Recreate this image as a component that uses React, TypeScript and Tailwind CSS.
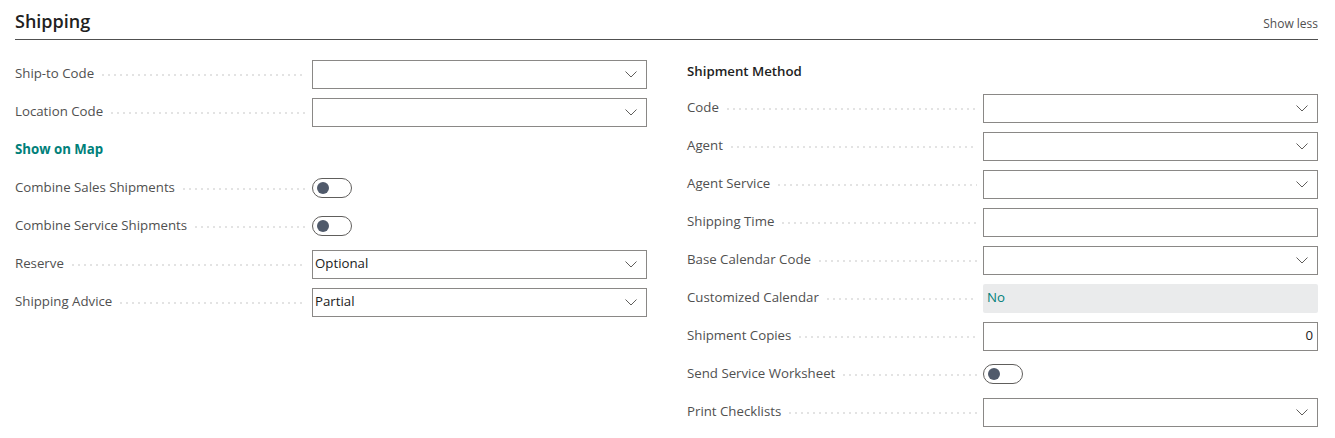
import React from 'react';

// 欄位類型
type Field =
  | { label: string; kind: 'select'; value?: string }
  | { label: string; kind: 'text'; value?: string; align?: 'right' }
  | { label: string; kind: 'toggle' }
  | { label: string; kind: 'readonly'; value: string };

const leftFields: Field[] = [
  { label: 'Ship-to Code', kind: 'select' },
  { label: 'Location Code', kind: 'select' },
];

const leftFields2: Field[] = [
  { label: 'Combine Sales Shipments', kind: 'toggle' },
  { label: 'Combine Service Shipments', kind: 'toggle' },
  { label: 'Reserve', kind: 'select', value: 'Optional' },
  { label: 'Shipping Advice', kind: 'select', value: 'Partial' },
];

const rightFields: Field[] = [
  { label: 'Code', kind: 'select' },
  { label: 'Agent', kind: 'select' },
  { label: 'Agent Service', kind: 'select' },
  { label: 'Shipping Time', kind: 'text' },
  { label: 'Base Calendar Code', kind: 'select' },
  { label: 'Customized Calendar', kind: 'readonly', value: 'No' },
  { label: 'Shipment Copies', kind: 'text', value: '0', align: 'right' },
  { label: 'Send Service Worksheet', kind: 'toggle' },
  { label: 'Print Checklists', kind: 'select' },
];

const Chevron = () => (
  <svg width="14" height="8" viewBox="0 0 14 8" fill="none" className="shrink-0">
    <path d="M1.5 1.5l5.5 5.5 5.5-5.5" stroke="#605e5c" strokeWidth="1" />
  </svg>
);

const Control: React.FC<{ field: Field }> = ({ field }) => {
  if (field.kind === 'toggle') {
    return (
      <div className="flex h-[20px] w-[40px] items-center rounded-full border border-[#605e5c] bg-white pl-[4px]">
        <div className="h-[12px] w-[12px] rounded-full bg-[#505a6b]" />
      </div>
    );
  }
  if (field.kind === 'readonly') {
    return (
      <div className="flex h-[29px] w-full items-center rounded-[2px] bg-[#eaebec] px-[4px] text-[#00807a]">
        {field.value}
      </div>
    );
  }
  if (field.kind === 'text') {
    return (
      <div
        className={`flex h-[29px] w-full items-center border border-[#8a8886] bg-white px-[4px] text-[#212121] ${
          field.align === 'right' ? 'justify-end' : 'justify-start'
        }`}
      >
        {field.value}
      </div>
    );
  }
  return (
    <div className="flex h-[29px] w-full items-center justify-between border border-[#8a8886] bg-white pl-[2px] pr-[8px] text-[#212121]">
      <span>{field.value}</span>
      <Chevron />
    </div>
  );
};

const FieldRow: React.FC<{ field: Field; labelW?: string }> = ({ field, labelW = 'w-[297px]' }) => (
  <div className="flex h-[38px] items-center">
    <div className={`flex ${labelW} shrink-0 items-center pr-[6px]`}>
      <span className="whitespace-nowrap text-[#505050]">{field.label}</span>
      {/* 虛線引導 */}
      <span className="ml-[8px] mt-[2px] h-[2px] flex-1 bg-[linear-gradient(to_right,#e3e3e3_2px,transparent_2px)] bg-[length:6px_2px] bg-repeat-x" />
    </div>
    <div className="flex flex-1 items-center">
      <Control field={field} />
    </div>
  </div>
);

export default function App() {
  return (
    <div
      className="h-[438px] w-[1335px] bg-white pl-[15px] pr-[17px] pt-[9px] text-[13.25px]"
      style={{ fontFamily: '"Open Sans", "Noto Sans", sans-serif' }}
    >
      {/* 標題列 */}
      <div className="flex items-end justify-between border-b border-[#505050] pb-[5px]">
        <h1 className="text-[18px] font-semibold leading-[25px] text-[#212121]">Shipping</h1>
        <button className="mb-[1px] text-[12px] text-[#505050]">Show less</button>
      </div>

      <div className="mt-[15px] flex gap-[40px]">
        {/* 左欄 */}
        <div className="w-[632px]">
          {leftFields.map((f) => (
            <FieldRow key={f.label} field={f} />
          ))}
          <div className="flex h-[38px] items-center font-bold text-[#00807a]">Show on Map</div>
          {leftFields2.map((f) => (
            <FieldRow key={f.label} field={f} />
          ))}
        </div>

        {/* 右欄 */}
        <div className="w-[631px]">
          <div className="flex h-[34px] items-center font-semibold text-[#212121]">Shipment Method</div>
          {rightFields.map((f) => (
            <FieldRow key={f.label} field={f} labelW="w-[296px]" />
          ))}
        </div>
      </div>
    </div>
  );
}
